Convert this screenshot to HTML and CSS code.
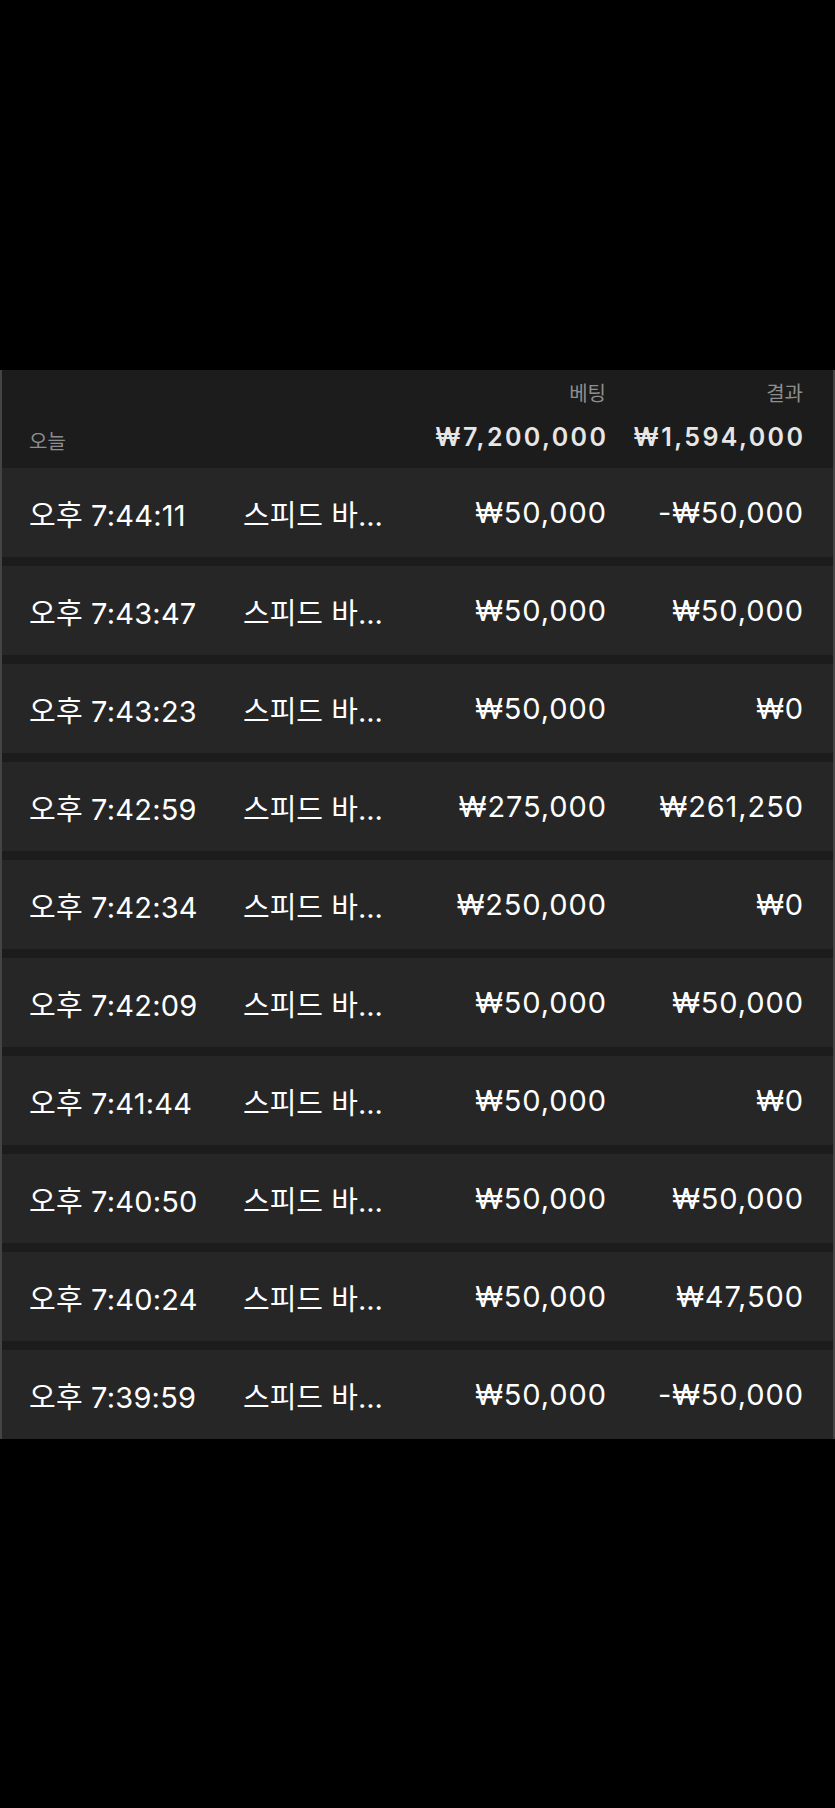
FILE: index.html
```html
<!DOCTYPE html>
<html lang="ko">
<head>
    <meta charset="UTF-8">
    <meta name="viewport" content="width=device-width, initial-scale=1.0">
    <title>베팅 내역</title>
    <link rel="stylesheet" href="styles.css">
</head>
<body>

    <div class="screen">
        <div class="history">
            <div class="history-head">
                <span class="head-label bet-col">베팅</span>
                <span class="head-label result-col">결과</span>
                <span class="head-day">오늘</span>
                <span class="head-total bet-col">₩7,200,000</span>
                <span class="head-total result-col">₩1,594,000</span>
            </div>

            <div class="row">
                <span class="time">오후 7:44:11</span>
                <span class="game">스피드 바...</span>
                <span class="amount">₩50,000</span>
                <span class="amount">-₩50,000</span>
            </div>
            <div class="row">
                <span class="time">오후 7:43:47</span>
                <span class="game">스피드 바...</span>
                <span class="amount">₩50,000</span>
                <span class="amount">₩50,000</span>
            </div>
            <div class="row">
                <span class="time">오후 7:43:23</span>
                <span class="game">스피드 바...</span>
                <span class="amount">₩50,000</span>
                <span class="amount">₩0</span>
            </div>
            <div class="row">
                <span class="time">오후 7:42:59</span>
                <span class="game">스피드 바...</span>
                <span class="amount">₩275,000</span>
                <span class="amount">₩261,250</span>
            </div>
            <div class="row">
                <span class="time">오후 7:42:34</span>
                <span class="game">스피드 바...</span>
                <span class="amount">₩250,000</span>
                <span class="amount">₩0</span>
            </div>
            <div class="row">
                <span class="time">오후 7:42:09</span>
                <span class="game">스피드 바...</span>
                <span class="amount">₩50,000</span>
                <span class="amount">₩50,000</span>
            </div>
            <div class="row">
                <span class="time">오후 7:41:44</span>
                <span class="game">스피드 바...</span>
                <span class="amount">₩50,000</span>
                <span class="amount">₩0</span>
            </div>
            <div class="row">
                <span class="time">오후 7:40:50</span>
                <span class="game">스피드 바...</span>
                <span class="amount">₩50,000</span>
                <span class="amount">₩50,000</span>
            </div>
            <div class="row">
                <span class="time">오후 7:40:24</span>
                <span class="game">스피드 바...</span>
                <span class="amount">₩50,000</span>
                <span class="amount">₩47,500</span>
            </div>
            <div class="row">
                <span class="time">오후 7:39:59</span>
                <span class="game">스피드 바...</span>
                <span class="amount">₩50,000</span>
                <span class="amount">-₩50,000</span>
            </div>
        </div>
    </div>

</body>
</html>
```

FILE: styles.css
```css
body { margin: 0; background: #000; font-family: Inter, "Noto Sans CJK KR", sans-serif; color: #fff; }
.screen { padding-top: 370px; min-height: 1808px; box-sizing: border-box; }

.history {
    background: #1c1c1c;
    border-left: 2px solid #444;
    border-right: 2px solid #444;
    display: flex; flex-direction: column; gap: 9px;
}

.history-head, .row {
    display: grid;
    grid-template-columns: 214px 150px 213px 197px;
    padding: 0 30px 0 27px;
}

.history-head {
    grid-template-rows: 28px 30px;
    row-gap: 14px;
    padding-top: 10px; padding-bottom: 16px;
    margin-bottom: -9px;
}
.head-label { grid-row: 1; font-size: 20px; line-height: 28px; color: #8e8e8e; text-align: right; }
.head-total { grid-row: 2; font-size: 25px; line-height: 30px; font-weight: 600; letter-spacing: 2.4px; margin-right: -2.4px; color: #e6e6e6; text-align: right; }
.head-day { grid-row: 2; grid-column: 1; align-self: end; font-size: 20px; line-height: 20px; color: #8e8e8e; }
.bet-col { grid-column: 3; }
.result-col { grid-column: 4; }

.row {
    height: 89px; align-items: center;
    background: #262626;
    font-size: 29px;
}
.row .time { white-space: nowrap; letter-spacing: 0.2px; }
.row .game { white-space: nowrap; }
.row .amount { text-align: right; letter-spacing: 0.9px; margin-right: -0.9px; }
```
